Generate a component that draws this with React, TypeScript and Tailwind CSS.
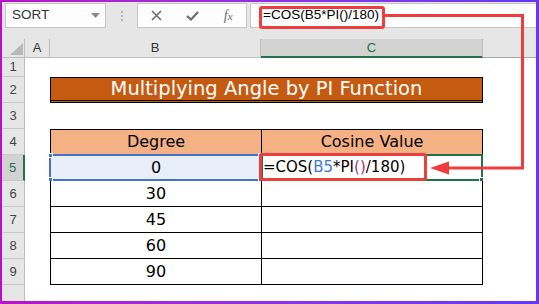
import React from "react";

const ui = { fontFamily: '"Liberation Sans", Arial, sans-serif' };
const cell = { fontFamily: '"DejaVu Sans", "Liberation Sans", sans-serif' };

const rows = [
  { n: 1, h: "h-[19px]" },
  { n: 2, h: "h-[26px]" },
  { n: 3, h: "h-[26px]" },
  { n: 4, h: "h-[26px]" },
  { n: 5, h: "h-[26px]" },
  { n: 6, h: "h-[26px]" },
  { n: 7, h: "h-[26px]" },
  { n: 8, h: "h-[26px]" },
  { n: 9, h: "h-[26px]" },
];

const degrees: Record<number, string> = { 5: "0", 6: "30", 7: "45", 8: "60", 9: "90" };

function Handle({ className }: { className: string }) {
  return <span className={`absolute w-[5px] h-[5px] border border-white ${className}`} />;
}

function RowHead({ n }: { n: number }) {
  const active = n === 5;
  return (
    <div
      className={`w-[23px] shrink-0 flex items-center justify-center text-[13px] border-b border-[#c9c9c9] ${
        active
          ? "bg-[#d2d2d2] text-[#217346] border-r-2 border-r-[#217346]"
          : "bg-[#e6e6e6] text-[#444] border-r border-r-[#bdbdbd]"
      }`}
      style={ui}
    >
      {n}
    </div>
  );
}

function Row({ n, h }: { n: number; h: string }) {
  return (
    <div className={`flex ${h}`}>
      <RowHead n={n} />
      <div className="w-[25px] shrink-0 bg-white" />
      {n === 2 ? (
        <div
          className="w-[433px] shrink-0 bg-[#c55a11] border border-black border-b-[3px] border-b-black border-double flex items-center justify-center text-white text-[19.5px]"
          style={cell}
        >
          Multiplying Angle by PI Function
        </div>
      ) : n >= 4 ? (
        <>
          <div
            className={`relative w-[211px] shrink-0 border-l border-b border-black flex items-center justify-center text-[16px] text-black ${
              n === 4 ? "bg-[#f4b183] border-t" : n === 5 ? "bg-[#e9eff8]" : "bg-white"
            }`}
            style={cell}
          >
            {n === 4 ? "Degree" : degrees[n]}
            {n === 5 && (
              <div className="absolute -left-[2px] -top-[1px] -right-[1px] -bottom-[1px] border-2 border-[#4472c4]">
                <Handle className="bg-[#4472c4] -left-[3px] -top-[3px]" />
                <Handle className="bg-[#4472c4] -right-[3px] -top-[3px]" />
                <Handle className="bg-[#4472c4] -left-[3px] -bottom-[3px]" />
                <Handle className="bg-[#4472c4] -right-[3px] -bottom-[3px]" />
              </div>
            )}
          </div>
          <div
            className={`relative w-[222px] shrink-0 border-l border-r border-b border-black flex items-center text-black ${
              n === 4 ? "bg-[#f4b183] border-t justify-center text-[16px]" : "bg-white"
            }`}
            style={cell}
          >
            {n === 4 && "Cosine Value"}
            {n === 5 && (
              <>
                <span className="pl-[1px] text-[15px] whitespace-nowrap">
                  =COS(<span className="text-[#3d7ad6]">B5</span>*PI
                  <span className="text-[#b0306a]">()</span>/180)
                </span>
                <div className="absolute -left-[1px] -top-[1px] -right-[1px] -bottom-[1px] border-2 border-[#217346]">
                  <Handle className="bg-[#217346] -right-[3px] -bottom-[3px]" />
                </div>
                <div className="absolute -left-[3px] -top-[2px] w-[168px] h-[28px] border-[3px] border-[#ee3d3d] rounded-[3px]" />
              </>
            )}
          </div>
        </>
      ) : (
        <div className="w-[433px] shrink-0 bg-white" />
      )}
      <div className="flex-1 bg-white" />
    </div>
  );
}

export default function App() {
  return (
    <div className="w-[539px] h-[304px] bg-gradient-to-r from-[#b80fcc] to-[#6338fb] pt-[2px] pl-[2px] pr-[3px] pb-[3px]">
      <div className="relative w-full h-full bg-[#e6e6e6] flex flex-col overflow-hidden" style={ui}>
        {/* formula bar */}
        <div className="flex items-start pt-[1px] h-[26px] shrink-0">
          <div className="ml-[3px] w-[101px] h-[25px] bg-[#fdfdfd] border border-[#c6c6c6] flex items-center justify-between pl-[6px] pr-[5px]">
            <span className="text-[13.5px] text-[#333]">SORT</span>
            <svg width="9" height="5" viewBox="0 0 9 5">
              <path d="M0 0 H9 L4.5 5 Z" fill="#8a8a8a" />
            </svg>
          </div>
          <div className="w-[31px] h-[25px] flex flex-col items-center justify-center gap-[2px]">
            <span className="w-[2px] h-[2px] bg-[#b5b5b5]" />
            <span className="w-[2px] h-[2px] bg-[#b5b5b5]" />
            <span className="w-[2px] h-[2px] bg-[#b5b5b5]" />
          </div>
          <div className="w-[110px] h-[25px] bg-[#fdfdfd] border border-[#c6c6c6] flex items-center pl-[1px]">
            <span className="w-[36px] flex justify-center">
              <svg width="11" height="11" viewBox="0 0 11 11">
                <path d="M1 1 L10 10 M10 1 L1 10" stroke="#6e6e6e" strokeWidth="1.6" />
              </svg>
            </span>
            <span className="w-[36px] flex justify-center">
              <svg width="13" height="10" viewBox="0 0 13 10">
                <path d="M1 5 L5 8.5 L12 1" stroke="#6e6e6e" strokeWidth="2.2" fill="none" />
              </svg>
            </span>
            <span
              className="w-[36px] flex justify-center italic text-[14px] text-[#6e6e6e]"
              style={{ fontFamily: '"Liberation Serif", serif' }}
            >
              f<span className="text-[11px] mt-[3px]">x</span>
            </span>
          </div>
          <div className="ml-[3px] flex-1 h-[25px] bg-[#fdfdfd] border border-[#c6c6c6] border-r-0 flex items-center pl-[12px]">
            <span className="text-[13.5px] text-black whitespace-nowrap">=COS(B5*PI()/180)</span>
          </div>
        </div>

        <div className="h-[11px] shrink-0" />

        {/* column headers */}
        <div className="flex h-[19px] shrink-0 text-[13px] text-[#333]">
          <div className="relative w-[23px] shrink-0 border-r border-b border-[#bdbdbd]">
            <svg className="absolute right-[1px] bottom-[2px]" width="13" height="12" viewBox="0 0 13 12">
              <path d="M13 0 V12 H0 Z" fill="#b9b9b9" />
            </svg>
          </div>
          <div className="w-[25px] shrink-0 flex items-center justify-center border-r border-b border-[#bdbdbd]">A</div>
          <div className="w-[211px] shrink-0 flex items-center justify-center border-r border-b border-[#bdbdbd]">B</div>
          <div className="w-[222px] shrink-0 flex items-center justify-center bg-[#d3d3d3] text-[#217346] border-r border-r-[#bdbdbd] border-b-2 border-b-[#217346]">
            C
          </div>
          <div className="flex-1 border-b border-[#a9a9a9]" />
        </div>

        {rows.map((r) => (
          <Row key={r.n} n={r.n} h={r.h} />
        ))}

        <div className="flex flex-1">
          <div className="w-[23px] shrink-0 bg-[#e6e6e6] border-r border-[#bdbdbd]" />
          <div className="flex-1 bg-white" />
        </div>

        {/* callout */}
        <div className="absolute left-[257px] top-[4px] w-[126px] h-[23px] border-[3px] border-[#ee3d3d] rounded-[3px]" />
        <svg className="absolute left-0 top-0 pointer-events-none" width="534" height="299" viewBox="0 0 534 299">
          <polyline points="382,13.5 520.5,13.5 520.5,166 444,166" fill="none" stroke="#ee3d3d" strokeWidth="3" />
          <path d="M428 166 L447 159.5 L447 172.5 Z" fill="#ee3d3d" />
        </svg>
      </div>
    </div>
  );
}
